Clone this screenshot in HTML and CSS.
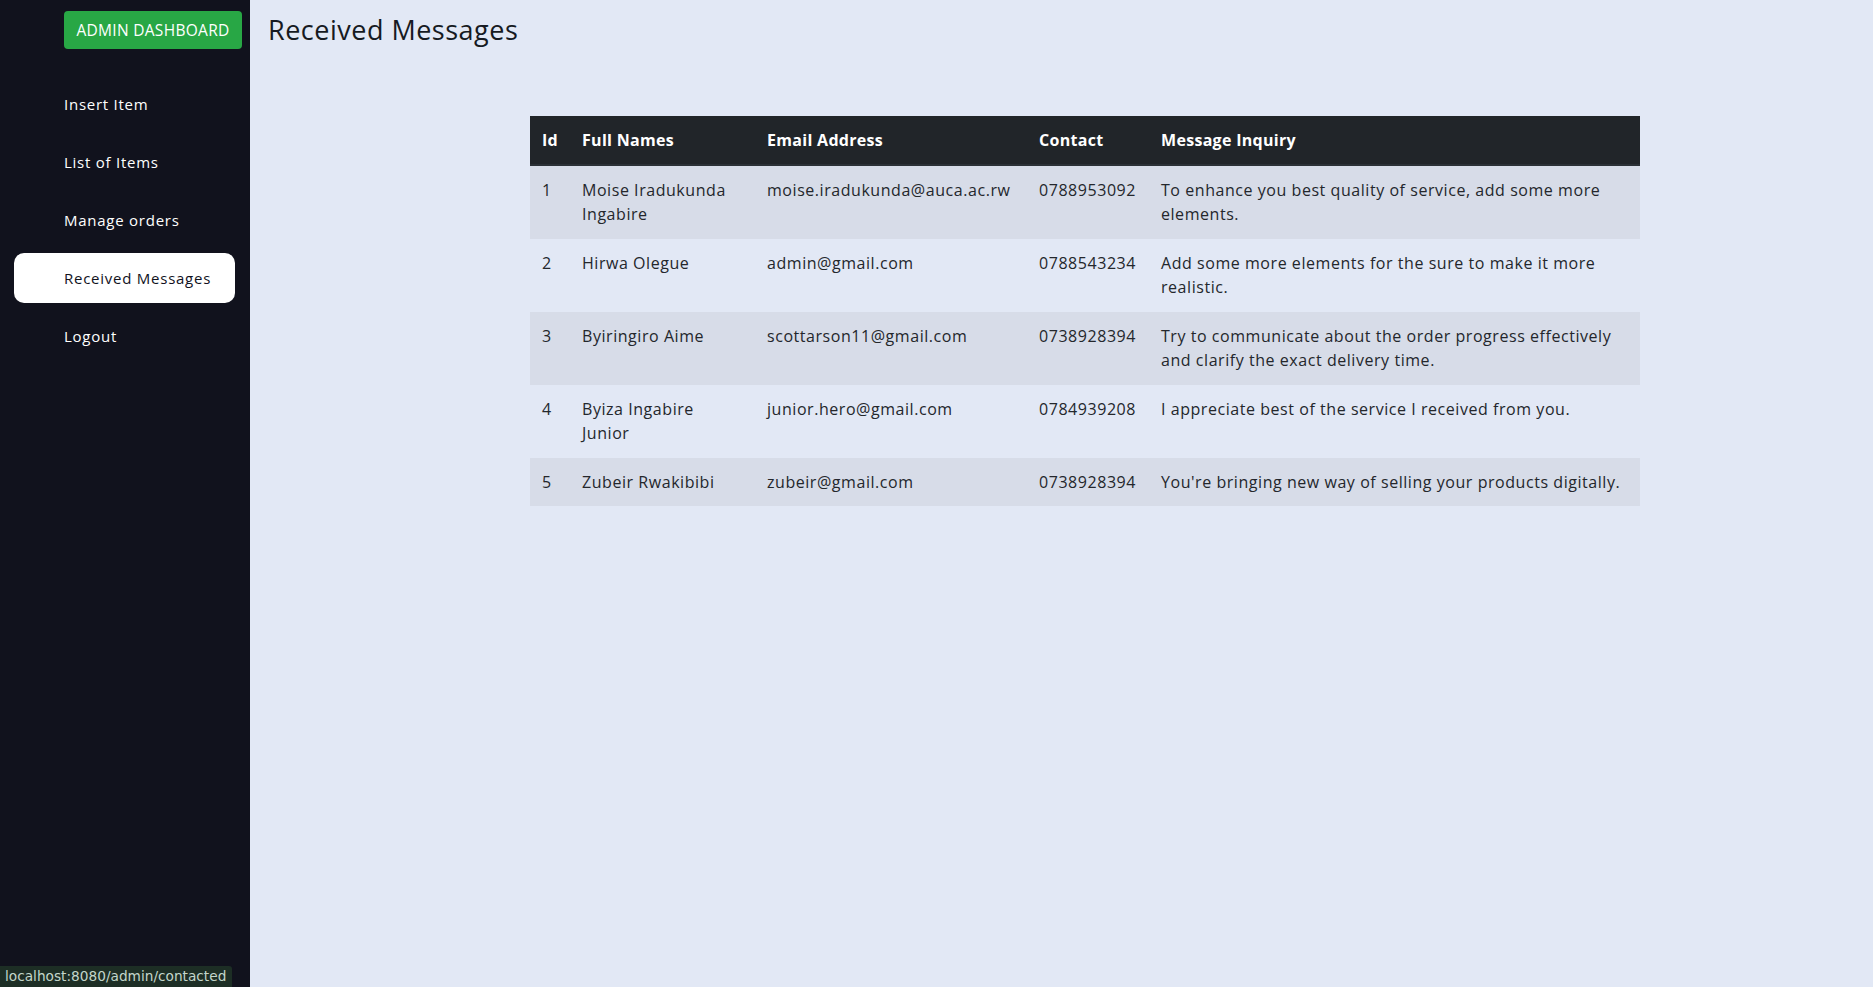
FILE: index.html
```html
<!DOCTYPE html>
<html lang="en">
<head>
<meta charset="utf-8">
<title>Received Messages</title>
<link rel="stylesheet" href="styles.css">
</head>
<body>
<div class="layout">
  <aside class="sidebar">
    <div class="brand">ADMIN DASHBOARD</div>
    <nav class="nav">
      <a class="nav-item" href="#">Insert Item</a>
      <a class="nav-item" href="#">List of Items</a>
      <a class="nav-item" href="#">Manage orders</a>
      <a class="nav-item active" href="#">Received Messages</a>
      <a class="nav-item" href="#">Logout</a>
    </nav>
  </aside>
  <main class="main">
    <h3 class="page-title">Received Messages</h3>
    <div class="table-wrap">
      <table class="msg-table">
        <colgroup>
          <col class="c-id"><col class="c-name"><col class="c-email"><col class="c-contact"><col class="c-msg">
        </colgroup>
        <thead>
          <tr><th>Id</th><th>Full Names</th><th>Email Address</th><th>Contact</th><th>Message Inquiry</th></tr>
        </thead>
        <tbody>
          <tr><td>1</td><td>Moise Iradukunda Ingabire</td><td>moise.iradukunda@auca.ac.rw</td><td>0788953092</td><td>To enhance you best quality of service, add some more elements.</td></tr>
          <tr><td>2</td><td>Hirwa Olegue</td><td>admin@gmail.com</td><td>0788543234</td><td>Add some more elements for the sure to make it more realistic.</td></tr>
          <tr><td>3</td><td>Byiringiro Aime</td><td>scottarson11@gmail.com</td><td>0738928394</td><td>Try to communicate about the order progress effectively and clarify the exact delivery time.</td></tr>
          <tr><td>4</td><td>Byiza Ingabire Junior</td><td>junior.hero@gmail.com</td><td>0784939208</td><td>I appreciate best of the service I received from you.</td></tr>
          <tr><td>5</td><td>Zubeir Rwakibibi</td><td>zubeir@gmail.com</td><td>0738928394</td><td>You're bringing new way of selling your products digitally.</td></tr>
        </tbody>
      </table>
    </div>
  </main>
</div>
<div class="status-bubble">localhost:8080/admin/contacted</div>
</body>
</html>
```
FILE: styles.css
```css
* { box-sizing: border-box; }
html, body { margin: 0; padding: 0; height: 100%; }
body {
  font-family: "Open Sans", "Noto Sans", sans-serif;
  background: #e2e8f5;
  color: #212529;
  overflow: hidden;
}
.layout {
  display: flex;
  height: 987px;
}
.sidebar {
  width: 250px;
  flex: 0 0 250px;
  background: #11121d;
  display: flex;
  flex-direction: column;
  padding-top: 11px;
}
.brand {
  margin-left: 64px;
  width: 178px;
  height: 38px;
  background: #28a745;
  color: #fff;
  border-radius: 4px;
  font-size: 15.5px;
  letter-spacing: 0.3px;
  display: flex;
  align-items: center;
  justify-content: center;
}
.nav {
  display: flex;
  flex-direction: column;
  gap: 8px;
  margin-top: 30px;
  padding-left: 14px;
}
.nav-item {
  display: flex;
  align-items: center;
  width: 221px;
  height: 50px;
  padding-left: 50px;
  border-radius: 10px;
  color: #fff;
  font-size: 15px;
  letter-spacing: 0.75px;
  text-decoration: none;
}
.nav-item.active {
  background: #fff;
  color: #11121d;
}
.main {
  flex: 1;
  padding: 12px 0 0 18px;
}
.page-title {
  margin: 0;
  font-size: 27px;
  font-weight: 500;
  letter-spacing: 0.5px;
  line-height: 36px;
  color: #161a22;
}
.table-wrap {
  margin-top: 68px;
  margin-left: 262px;
  width: 1110px;
}
.msg-table {
  width: 1110px;
  table-layout: fixed;
  border-collapse: collapse;
  font-size: 16px;
  line-height: 24px;
  letter-spacing: 0.55px;
}
.c-id { width: 40px; }
.c-name { width: 185px; }
.c-email { width: 272px; }
.c-contact { width: 122px; }
.c-msg { width: 491px; }
.msg-table th {
  background: #212529;
  color: #fff;
  font-weight: 700;
  letter-spacing: 0.3px;
  text-align: left;
  padding: 12px 12px;
  border-bottom: 2px solid #2b3036;
}
.msg-table td {
  padding: 12px 12px;
  vertical-align: top;
  border-top: 1px solid transparent;
  color: #24272c;
}
.msg-table tbody tr:nth-child(odd) td {
  background: #d7dce8;
}
.status-bubble {
  position: fixed;
  left: 0;
  bottom: 0;
  height: 21px;
  padding: 0 6px 0 5px;
  background: #1d2e25;
  color: #c3d6cb;
  font-family: "DejaVu Sans", sans-serif;
  font-size: 13.7px;
  line-height: 21px;
  border-top-right-radius: 3px;
}
```
